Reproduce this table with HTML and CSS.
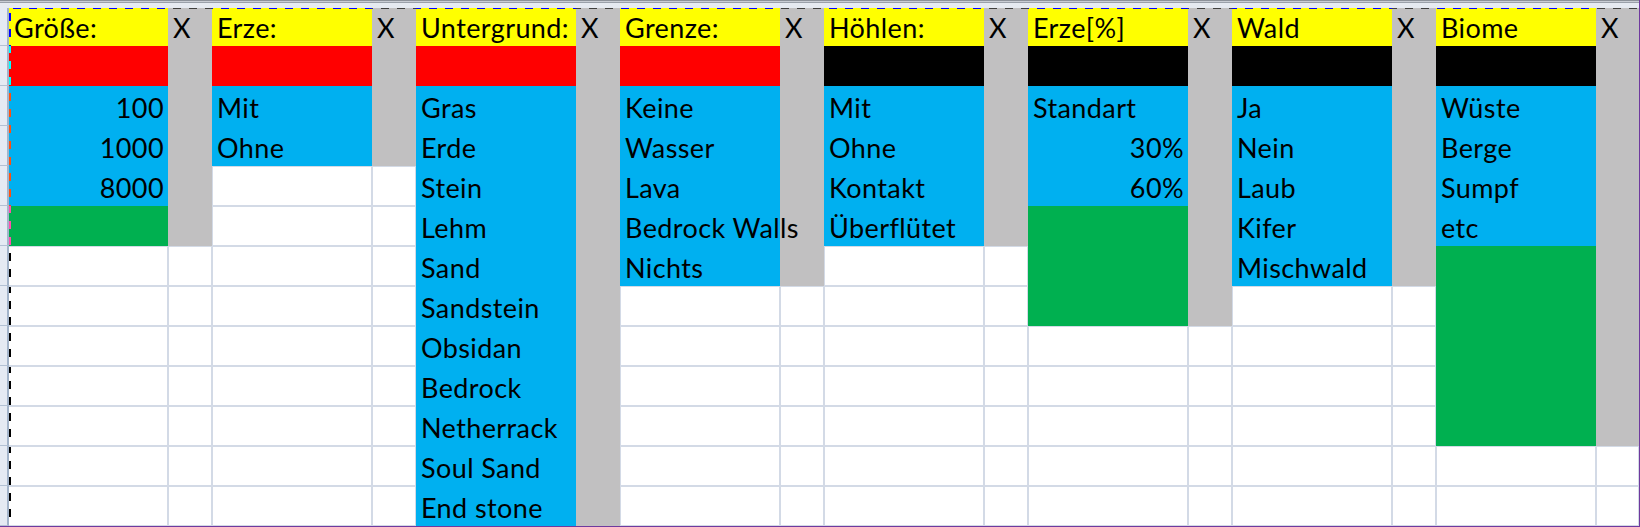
FILE: index.html
```html
<!DOCTYPE html>
<html lang="de">
<head>
<meta charset="utf-8">
<title>Einstellungen</title>
<link rel="stylesheet" href="styles.css">
</head>
<body>
<div class="sheet">
  <div class="topbar"></div>

  <div class="rh"></div>
  <div class="c y hd lead">Größe:</div><div class="c s hd">X</div>
  <div class="c y hd">Erze:</div><div class="c s hd">X</div>
  <div class="c y hd">Untergrund:</div><div class="c s hd">X</div>
  <div class="c y hd">Grenze:</div><div class="c s hd">X</div>
  <div class="c y hd">Höhlen:</div><div class="c s hd">X</div>
  <div class="c y hd">Erze[%]</div><div class="c s hd">X</div>
  <div class="c y hd">Wald</div><div class="c s hd">X</div>
  <div class="c y hd">Biome</div><div class="c s hd">X</div>

  <div class="rh"></div>
  <div class="c r lead"></div><div class="c s"></div>
  <div class="c r"></div><div class="c s"></div>
  <div class="c r"></div><div class="c s"></div>
  <div class="c r"></div><div class="c s"></div>
  <div class="c k"></div><div class="c s"></div>
  <div class="c k"></div><div class="c s"></div>
  <div class="c k"></div><div class="c s"></div>
  <div class="c k"></div><div class="c s"></div>

  <div class="rh"></div>
  <div class="c b lead num">100</div><div class="c s"></div>
  <div class="c b">Mit</div><div class="c s"></div>
  <div class="c b">Gras</div><div class="c s"></div>
  <div class="c b">Keine</div><div class="c s"></div>
  <div class="c b">Mit</div><div class="c s"></div>
  <div class="c b">Standart</div><div class="c s"></div>
  <div class="c b">Ja</div><div class="c s"></div>
  <div class="c b">Wüste</div><div class="c s"></div>

  <div class="rh"></div>
  <div class="c b lead num">1000</div><div class="c s"></div>
  <div class="c b">Ohne</div><div class="c s"></div>
  <div class="c b">Erde</div><div class="c s"></div>
  <div class="c b">Wasser</div><div class="c s"></div>
  <div class="c b">Ohne</div><div class="c s"></div>
  <div class="c b num">30%</div><div class="c s"></div>
  <div class="c b">Nein</div><div class="c s"></div>
  <div class="c b">Berge</div><div class="c s"></div>

  <div class="rh"></div>
  <div class="c b lead num">8000</div><div class="c s"></div>
  <div class="c w"></div><div class="c w"></div>
  <div class="c b">Stein</div><div class="c s"></div>
  <div class="c b">Lava</div><div class="c s"></div>
  <div class="c b">Kontakt</div><div class="c s"></div>
  <div class="c b num">60%</div><div class="c s"></div>
  <div class="c b">Laub</div><div class="c s"></div>
  <div class="c b">Sumpf</div><div class="c s"></div>

  <div class="rh"></div>
  <div class="c g lead"></div><div class="c s"></div>
  <div class="c w"></div><div class="c w"></div>
  <div class="c b">Lehm</div><div class="c s"></div>
  <div class="c b ov">Bedrock Walls</div><div class="c s"></div>
  <div class="c b">Überflütet</div><div class="c s"></div>
  <div class="c g"></div><div class="c s"></div>
  <div class="c b">Kifer</div><div class="c s"></div>
  <div class="c b">etc</div><div class="c s"></div>

  <div class="rh"></div>
  <div class="c w lead"></div><div class="c w"></div>
  <div class="c w"></div><div class="c w"></div>
  <div class="c b">Sand</div><div class="c s"></div>
  <div class="c b">Nichts</div><div class="c s"></div>
  <div class="c w"></div><div class="c w"></div>
  <div class="c g"></div><div class="c s"></div>
  <div class="c b">Mischwald</div><div class="c s"></div>
  <div class="c g"></div><div class="c s"></div>

  <div class="rh"></div>
  <div class="c w lead"></div><div class="c w"></div>
  <div class="c w"></div><div class="c w"></div>
  <div class="c b">Sandstein</div><div class="c s"></div>
  <div class="c w"></div><div class="c w"></div>
  <div class="c w"></div><div class="c w"></div>
  <div class="c g"></div><div class="c s"></div>
  <div class="c w"></div><div class="c w"></div>
  <div class="c g"></div><div class="c s"></div>

  <div class="rh"></div>
  <div class="c w lead"></div><div class="c w"></div>
  <div class="c w"></div><div class="c w"></div>
  <div class="c b">Obsidan</div><div class="c s"></div>
  <div class="c w"></div><div class="c w"></div>
  <div class="c w"></div><div class="c w"></div>
  <div class="c w"></div><div class="c w"></div>
  <div class="c w"></div><div class="c w"></div>
  <div class="c g"></div><div class="c s"></div>

  <div class="rh"></div>
  <div class="c w lead"></div><div class="c w"></div>
  <div class="c w"></div><div class="c w"></div>
  <div class="c b">Bedrock</div><div class="c s"></div>
  <div class="c w"></div><div class="c w"></div>
  <div class="c w"></div><div class="c w"></div>
  <div class="c w"></div><div class="c w"></div>
  <div class="c w"></div><div class="c w"></div>
  <div class="c g"></div><div class="c s"></div>

  <div class="rh"></div>
  <div class="c w lead"></div><div class="c w"></div>
  <div class="c w"></div><div class="c w"></div>
  <div class="c b">Netherrack</div><div class="c s"></div>
  <div class="c w"></div><div class="c w"></div>
  <div class="c w"></div><div class="c w"></div>
  <div class="c w"></div><div class="c w"></div>
  <div class="c w"></div><div class="c w"></div>
  <div class="c g"></div><div class="c s"></div>

  <div class="rh"></div>
  <div class="c w lead"></div><div class="c w"></div>
  <div class="c w"></div><div class="c w"></div>
  <div class="c b">Soul Sand</div><div class="c s"></div>
  <div class="c w"></div><div class="c w"></div>
  <div class="c w"></div><div class="c w"></div>
  <div class="c w"></div><div class="c w"></div>
  <div class="c w"></div><div class="c w"></div>
  <div class="c w"></div><div class="c w"></div>

  <div class="rh"></div>
  <div class="c w lead"></div><div class="c w"></div>
  <div class="c w"></div><div class="c w"></div>
  <div class="c b">End stone</div><div class="c s"></div>
  <div class="c w"></div><div class="c w"></div>
  <div class="c w"></div><div class="c w"></div>
  <div class="c w"></div><div class="c w"></div>
  <div class="c w"></div><div class="c w"></div>
  <div class="c w"></div><div class="c w"></div>
</div>
</body>
</html>
```
FILE: styles.css
```css
html, body {
  margin: 0;
  padding: 0;
  background: #ffffff;
}

.sheet {
  display: grid;
  grid-template-columns: 9px 159px 44px repeat(6, 160px 44px) 160px 43px;
  grid-template-rows: 8px 38px repeat(12, 40px);
  width: 1640px;
  height: 527px;
  box-sizing: border-box;
  border-right: 1px solid #6f3a9e;
  border-bottom: 1px solid #6f3a9e;
  overflow: hidden;
  font-family: Lato, "Liberation Sans", sans-serif;
  font-size: 27px;
  letter-spacing: 0.4px;
  color: #000;
}

.topbar {
  grid-column: 1 / -1;
  background: linear-gradient(to bottom, #8c9199 0 1px, #c9cdd4 1px 2px, #9aa0a9 2px 3px, #e6eaf1 3px 100%);
}

.rh {
  background: #e5eaf3;
  box-sizing: border-box;
  border-right: 2px solid #a3b4ca;
  border-bottom: 1px solid #b3c1d4;
}

.c {
  box-sizing: border-box;
  display: flex;
  align-items: flex-end;
  padding: 0 4px 2px 5px;
  white-space: nowrap;
  overflow: visible;
  line-height: 1.2;
  --ant: #000;
}

.num { justify-content: flex-end; }
.ov { z-index: 1; }

.y { background-color: #ffff00; --ant: #0000ff; }
.r { background-color: #ff0000; --ant: #00ffff; }
.k { background-color: #000000; --ant: #ffffff; }
.b { background-color: #00b0f0; --ant: #ff4f0f; }
.g { background-color: #00b050; --ant: #ff4faf; }
.s { background-color: #c1c0c1; --ant: #3f3f3f; }
.w { background-color: #ffffff; --ant: #000000; border: 1px solid #d3dae6; }
.w.lead { border-left: 0; }

.hd {
  background-image: repeating-linear-gradient(90deg, var(--ant) 0 5px, transparent 5px 13px, var(--ant) 13px 16px);
  background-size: 100% 1px;
  background-position: 0 8px;
  background-repeat: no-repeat;
  background-attachment: fixed;
}

.lead {
  background-image: repeating-linear-gradient(180deg, var(--ant) 0 5px, transparent 5px 13px, var(--ant) 13px 16px);
  background-size: 2px 100%;
  background-position: 9px 0;
  background-repeat: no-repeat;
  background-attachment: fixed;
}

.hd.lead {
  background-image:
    repeating-linear-gradient(90deg, var(--ant) 0 5px, transparent 5px 13px, var(--ant) 13px 16px),
    repeating-linear-gradient(180deg, var(--ant) 0 5px, transparent 5px 13px, var(--ant) 13px 16px);
  background-size: 100% 1px, 2px 100%;
  background-position: 0 8px, 9px 0;
  background-repeat: no-repeat, no-repeat;
  background-attachment: fixed, fixed;
}
```
